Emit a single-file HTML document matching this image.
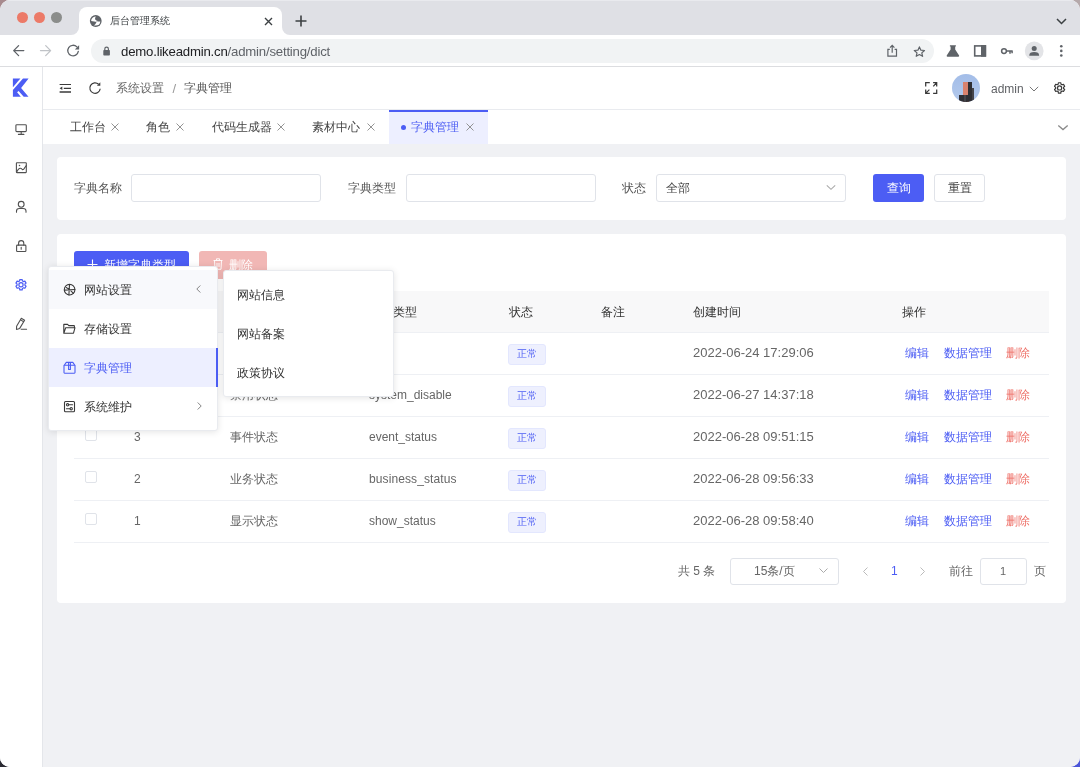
<!DOCTYPE html>
<html><head><meta charset="utf-8">
<style>
*{box-sizing:border-box;margin:0;padding:0}
html,body{width:1080px;height:767px;overflow:hidden}
body{position:relative;background:#fff;font-family:"Liberation Sans",sans-serif;color:#333}
.a{position:absolute}
.t{position:absolute;white-space:nowrap;line-height:1}
svg{position:absolute;overflow:visible}
.dot{position:absolute;width:11px;height:11px;border-radius:50%;top:12.4px}
.card{position:absolute;background:#fff;border-radius:4px}
.inp{position:absolute;border:1px solid #e0e3e9;border-radius:3px;background:#fff}
.lbl{position:absolute;font-size:12px;color:#606266;line-height:12px;white-space:nowrap}
.tabx{position:absolute;width:8px;height:8px}
.ic{fill:none;stroke:#4f4f4f;stroke-width:1.1;stroke-linecap:round;stroke-linejoin:round}
</style></head><body>
<!-- wallpaper corners -->
<div class="a" style="left:0;top:0;width:20px;height:20px;background:#a78a8e"></div>
<div class="a" style="right:0;top:0;width:20px;height:20px;background:#b5a9ab"></div>
<div class="a" style="left:0;bottom:0;width:20px;height:20px;background:#2b2b33"></div>
<div class="a" style="right:0;bottom:0;width:20px;height:20px;background:#4b55d8"></div>
<div class="a" style="left:0;top:0;width:1080px;height:767px;background:#fff;border-radius:10px;overflow:hidden;will-change:transform">
  <!-- tab strip -->
  <div class="a" style="left:0;top:0;width:1080px;height:35px;background:#dfe0e5;border-top:1px solid #e9eaee"></div>
  <div class="dot" style="left:17.4px;background:#ec7a68"></div>
  <div class="dot" style="left:34.3px;background:#ec7a68"></div>
  <div class="dot" style="left:51.3px;background:#8b8d8b"></div>
  <div class="a" style="left:71px;top:27px;width:219px;height:8px;background:#fff"></div>
  <div class="a" style="left:63px;top:19px;width:16px;height:16px;background:#dfe0e5;border-radius:0 0 8px 0"></div>
  <div class="a" style="left:282px;top:19px;width:16px;height:16px;background:#dfe0e5;border-radius:0 0 0 8px"></div>
  <div class="a" style="left:79px;top:7px;width:203px;height:28px;background:#fff;border-radius:8px 8px 0 0"></div>
  <!-- globe -->
  <svg style="left:0;top:0" width="1080" height="767"><circle cx="95.75" cy="21" r="5.9" fill="#5f6368"/><path d="M91.1 20.9Q91.2 18.9 92.9 17.5Q94.2 16.6 95.9 16.6Q94.6 18 95.2 19.4Q95.9 20.5 98.3 21.3Q96.8 22 94.2 21.5Q92.5 21.1 91.1 20.9Z" fill="#fff"/><path d="M100.3 21.6Q100.3 23.6 98.9 24.7Q97 25.8 94 25.4Q95.9 24.3 96.2 22.5Q96.7 21.6 98.3 21.5Z" fill="#fff"/></svg>
  <div class="t" style="left:109.5px;top:16px;font-size:10.3px;color:#3c4043">后台管理系统</div>
  <svg style="left:264px;top:17px" width="9" height="9" viewBox="0 0 9 9"><path d="M1 1L8 8M8 1L1 8" stroke="#3c4043" stroke-width="1.4"/></svg>
  <svg style="left:295px;top:15px" width="12" height="12" viewBox="0 0 12 12"><path d="M6 0.5V11.5M0.5 6H11.5" stroke="#3c4043" stroke-width="1.6"/></svg>
  <svg style="left:1056px;top:18px" width="11" height="7" viewBox="0 0 11 7"><path d="M1 1L5.5 5.5L10 1" fill="none" stroke="#3c4043" stroke-width="1.5"/></svg>
  <!-- toolbar -->
  <div class="a" style="left:0;top:35px;width:1080px;height:32px;background:#fff;border-bottom:1px solid #dcdde0"></div>
  <svg style="left:0;top:0" width="1080" height="767"><g fill="none" stroke-width="1.3" stroke-linecap="round" stroke-linejoin="round">
  <path d="M23.8 50.6H13.8M18.6 45.6L13.7 50.6L18.6 55.6" stroke="#5f6368"/>
  <path d="M40.5 50.6H50.5M45.7 45.6L50.6 50.6L45.7 55.6" stroke="#c0c3c7"/>
  <path d="M78.3 51.4A5.3 5.3 0 1 1 76.9 46.9" stroke="#5f6368"/></g>
  <path d="M79.1 45.3V49.6H74.8Z" fill="#5f6368"/>
  </svg>
  <div class="a" style="left:91px;top:39px;width:843px;height:23.6px;background:#f1f3f4;border-radius:12px"></div>
  <svg style="left:0;top:0" width="1080" height="767"><rect x="103.3" y="50" width="6.6" height="5.6" rx="0.8" fill="#5f6368"/><path d="M104.8 50.3V48.9A1.8 1.8 0 0 1 108.4 48.9V50.3" fill="none" stroke="#5f6368" stroke-width="1.2"/></svg>
  <div class="t" style="left:121px;top:44.5px;font-size:13.2px;letter-spacing:-0.2px;color:#202124">demo.likeadmin.cn<span style="color:#5f6368">/admin/setting/dict</span></div>
  <svg style="left:0;top:0" width="1080" height="767">
  <path d="M889.8 49.3H887.9V56.2H896.5V49.3H894.6M892.2 52.8V45.6M890 47.6L892.2 45.4L894.4 47.6" fill="none" stroke="#5f6368" stroke-width="1.2"/>
  <path d="M919.4 46.9L920.9 50.2L924.5 50.5L921.8 52.9L922.6 56.3L919.4 54.5L916.2 56.3L917 52.9L914.3 50.5L917.9 50.2Z" fill="none" stroke="#5f6368" stroke-width="1.2" stroke-linejoin="round"/>
  <path d="M949.9 45.2H955.9V46.5H955.2V49.4L959.1 55.6Q959.5 56.7 958.4 56.7H947.4Q946.3 56.7 946.7 55.6L950.6 49.4V46.5H949.9Z" fill="#5f6368"/>
  <rect x="974.7" y="45.9" width="10.7" height="10" fill="none" stroke="#5f6368" stroke-width="1.6"/><rect x="981" y="45.1" width="5.1" height="11.6" fill="#5f6368"/>
  <circle cx="1004" cy="51.1" r="2.4" fill="none" stroke="#5f6368" stroke-width="1.5"/><path d="M1006.3 51.1H1012.7M1010 51.1V53.8M1012.1 51.1V53.2" fill="none" stroke="#5f6368" stroke-width="1.5"/>
  <circle cx="1034.2" cy="50.9" r="9.4" fill="#e3e4e7"/>
  <circle cx="1034.2" cy="48.4" r="2.5" fill="#5f6368"/><path d="M1029.3 55.3Q1029.3 52.1 1034.2 52.1Q1039.1 52.1 1039.1 55.3V55.8H1029.3Z" fill="#5f6368"/>
  <circle cx="1061.3" cy="46.3" r="1.3" fill="#5f6368"/><circle cx="1061.3" cy="50.9" r="1.3" fill="#5f6368"/><circle cx="1061.3" cy="55.5" r="1.3" fill="#5f6368"/>
  </svg>
  <!-- ============ APP ============ -->
  <div class="a" style="left:0;top:67px;width:1080px;height:700px;background:#f0f1f4"></div>
  <!-- sidebar -->
  <div class="a" style="left:0;top:67px;width:43px;height:700px;background:#fff;border-right:1px solid #e4e6ea"></div>
  <svg style="left:0;top:0" width="1080" height="767"><path d="M12.9 78.6H20.4L12.9 87.3Z" fill="#4c5df4"/><path d="M23 78.6H28.6L21.1 88L28.5 96.8H23.7L18.6 91L17.1 92.3L20.8 96.8H12.9V90Z" fill="#4c5df4"/></svg>
  <svg style="left:0;top:0" width="1080" height="767"><g fill="none" stroke="#505050" stroke-width="1.1" stroke-linecap="round" stroke-linejoin="round">
  <rect x="15.9" y="124.7" width="10.4" height="6.9" rx="0.9"/><path d="M21.2 131.8V134.3M18.4 134.4H23.9"/>
  <rect x="16.4" y="162.7" width="9.9" height="9.9" rx="0.5"/><path d="M16.6 172.2Q18.6 168.3 20.2 168.3Q21.3 168.3 22.3 169.5Q23.5 170.3 24.8 167.6L26.3 165.5"/>
  <circle cx="21.2" cy="204.3" r="2.9"/><path d="M16.5 212.2V211Q16.5 208.5 19.3 208.5H23.2Q26 208.5 26 211V212.2"/>
  <rect x="16.6" y="245.1" width="9.3" height="6.4" rx="0.8"/><path d="M18.6 245.1V243.2A2.6 2.6 0 0 1 23.8 243.2V245.1M21.2 247.3V249.3"/>
  <path d="M21.3 318.3L24.6 320.2L19.7 328.4L16.5 329.4L16.6 326.3Z M20.5 319.9L23.7 321.8"/><path d="M21.2 329.3H26.6"/>
  </g><circle cx="19.5" cy="165.5" r="0.75" fill="#505050"/></svg>
  <!-- header -->
  <div class="a" style="left:43px;top:67px;width:1037px;height:43px;background:#fff;border-bottom:1px solid #e9ebef"></div>
  <svg style="left:0;top:0" width="1080" height="767"><path d="M59.6 84.5H71M63.8 88.3H71" stroke="#3a3a3a" stroke-width="1.2" fill="none"/><path d="M59.6 92H71" stroke="#3a3a3a" stroke-width="1.5" fill="none"/><path d="M59.6 88.3L62.3 86.5V90.1Z" fill="#3a3a3a"/><path d="M100.2 88.7A5.2 5.2 0 1 1 98.6 84.3" stroke="#3a3a3a" stroke-width="1.2" fill="none"/><path d="M100.3 82.3V85.7H96.9Z" fill="#3a3a3a"/>
  <path d="M1061.03 84.17 L1060.79 82.74 L1058.41 82.74 L1058.17 84.17 L1057.08 84.79 L1055.72 84.29 L1054.53 86.35 L1055.65 87.27 L1055.65 88.53 L1054.53 89.45 L1055.72 91.51 L1057.08 91.01 L1058.17 91.63 L1058.41 93.06 L1060.79 93.06 L1061.03 91.63 L1062.12 91.01 L1063.48 91.51 L1064.67 89.45 L1063.55 88.53 L1063.55 87.27 L1064.67 86.35 L1063.48 84.29 L1062.12 84.79Z" fill="none" stroke="#3a3a3a" stroke-width="1.2" stroke-linejoin="round"/><circle cx="1059.6" cy="87.9" r="2.1" fill="none" stroke="#3a3a3a" stroke-width="1.2"/>
  <path d="M22.43 280.97 L22.19 279.54 L19.81 279.54 L19.57 280.97 L18.48 281.59 L17.12 281.09 L15.93 283.15 L17.05 284.07 L17.05 285.33 L15.93 286.25 L17.12 288.31 L18.48 287.81 L19.57 288.43 L19.81 289.86 L22.19 289.86 L22.43 288.43 L23.52 287.81 L24.88 288.31 L26.07 286.25 L24.95 285.33 L24.95 284.07 L26.07 283.15 L24.88 281.09 L23.52 281.59Z" fill="none" stroke="#4c5df4" stroke-width="1.2" stroke-linejoin="round"/><circle cx="21" cy="284.7" r="2.1" fill="none" stroke="#4c5df4" stroke-width="1.2"/></svg>
  <div class="t" style="left:116px;top:82px;font-size:12px;color:#666">系统设置</div>
  <div class="t" style="left:172.5px;top:81.5px;font-size:13px;color:#999">/</div>
  <div class="t" style="left:184px;top:82px;font-size:12px;color:#555">字典管理</div>
  <!-- fullscreen -->
  <svg style="left:0;top:0" width="1080" height="767"><path d="M925.7 86.6V82.6H929.8M933.1 82.6H936.7V86.6M936.4 82.9L933.3 86.4M925.7 89.4V93.4H929.8M925.9 93.1L929.4 89.6M933.1 93.4H936.7V89.4" fill="none" stroke="#3a3a3a" stroke-width="1.25"/></svg>
  <!-- avatar -->
  <div class="a" style="left:952px;top:74px;width:28.4px;height:28.4px;border-radius:50%;background:linear-gradient(#a3bde8,#b3c9ec);overflow:hidden">
    <div class="a" style="left:11px;top:8px;width:5.5px;height:21px;background:#d9826e"></div>
    <div class="a" style="left:16.3px;top:8px;width:4px;height:21px;background:#2e2e33"></div>
    <div class="a" style="left:20.2px;top:14px;width:1.6px;height:13px;background:#44444a"></div>
    <div class="a" style="left:7px;top:21px;width:8.5px;height:8px;background:#2f2f35"></div>
    <div class="a" style="left:12px;top:21px;width:2px;height:8px;background:#44444a"></div>
  </div>
  <div class="t" style="left:991px;top:82.6px;font-size:12px;color:#606266">admin</div>
  <svg style="left:1029px;top:86px" width="10" height="6" viewBox="0 0 10 6"><path d="M0.8 0.8L5 5L9.2 0.8" fill="none" stroke="#777" stroke-width="1"/></svg>

  <!-- tabs -->
  <div class="a" style="left:43px;top:110px;width:1037px;height:34px;background:#fff"></div>
  <div class="t" style="left:70px;top:121px;font-size:12px;color:#444">工作台</div>
  <svg class="tabx" style="left:111px;top:123px" viewBox="0 0 8 8"><path d="M0.5 0.5L7.5 7.5M7.5 0.5L0.5 7.5" stroke="#888" stroke-width="0.9"/></svg>
  <div class="t" style="left:146px;top:121px;font-size:12px;color:#444">角色</div>
  <svg class="tabx" style="left:176px;top:123px" viewBox="0 0 8 8"><path d="M0.5 0.5L7.5 7.5M7.5 0.5L0.5 7.5" stroke="#888" stroke-width="0.9"/></svg>
  <div class="t" style="left:212px;top:121px;font-size:12px;color:#444">代码生成器</div>
  <svg class="tabx" style="left:277px;top:123px" viewBox="0 0 8 8"><path d="M0.5 0.5L7.5 7.5M7.5 0.5L0.5 7.5" stroke="#888" stroke-width="0.9"/></svg>
  <div class="t" style="left:312px;top:121px;font-size:12px;color:#444">素材中心</div>
  <svg class="tabx" style="left:367px;top:123px" viewBox="0 0 8 8"><path d="M0.5 0.5L7.5 7.5M7.5 0.5L0.5 7.5" stroke="#888" stroke-width="0.9"/></svg>
  <div class="a" style="left:389px;top:110px;width:99px;height:34px;background:#edefff;border-top:2px solid #4c5df4"></div>
  <div class="a" style="left:401px;top:125px;width:5px;height:5px;border-radius:50%;background:#4c5df4"></div>
  <div class="t" style="left:411px;top:121px;font-size:12px;color:#4c5df4">字典管理</div>
  <svg class="tabx" style="left:466px;top:123px" viewBox="0 0 8 8"><path d="M0.5 0.5L7.5 7.5M7.5 0.5L0.5 7.5" stroke="#888" stroke-width="0.9"/></svg>
  <svg style="left:0;top:0" width="1080" height="767"><path d="M1058.3 125.4L1063 129.6L1067.7 125.4" fill="none" stroke="#8a8a8a" stroke-width="1.3"/></svg>
  <!-- search card -->
  <div class="card" style="left:57px;top:157px;width:1009px;height:63px"></div>
  <div class="t" style="left:74px;top:182px;font-size:12px;color:#555">字典名称</div>
  <div class="inp" style="left:131px;top:174px;width:190px;height:28px"></div>
  <div class="t" style="left:348px;top:182px;font-size:12px;color:#555">字典类型</div>
  <div class="inp" style="left:406px;top:174px;width:190px;height:28px"></div>
  <div class="t" style="left:622px;top:182px;font-size:12px;color:#555">状态</div>
  <div class="inp" style="left:656px;top:174px;width:190px;height:28px"></div>
  <div class="t" style="left:666px;top:182px;font-size:12px;color:#444">全部</div>
  <svg style="left:0;top:0" width="1080" height="767"><path d="M826.8 185.3L831 189.3L835.2 185.3" fill="none" stroke="#ababab" stroke-width="1.15"/></svg>
  <div class="a" style="left:873px;top:174px;width:51px;height:28px;background:#4c5df4;border-radius:3px"></div>
  <div class="t" style="left:887px;top:182px;font-size:12px;color:#fff">查询</div>
  <div class="inp" style="left:934px;top:174px;width:51px;height:28px"></div>
  <div class="t" style="left:948px;top:182px;font-size:12px;color:#444">重置</div>

  <!-- table card -->
  <div class="card" style="left:57px;top:234px;width:1009px;height:369px"></div>
  <div class="a" style="left:74px;top:251px;width:115px;height:28px;background:#4c5df4;border-radius:3px"></div>
  <svg style="left:87px;top:259px" width="11" height="11" viewBox="0 0 11 11"><path d="M5.5 0.5V10.5M0.5 5.5H10.5" stroke="#fff" stroke-width="1.1"/></svg>
  <div class="t" style="left:104px;top:259px;font-size:12px;color:#fff">新增字典类型</div>
  <div class="a" style="left:199px;top:251px;width:68px;height:28px;background:#f1b7b5;border-radius:3px"></div>
  <svg style="left:213px;top:258px" width="10" height="12" viewBox="0 0 10 12"><path d="M0.5 2.5H9.5M3.5 2.5V0.8H6.5V2.5M1.5 2.5L2 11.3H8L8.5 2.5M4 5V9M6 5V9" fill="none" stroke="#fff" stroke-width="0.9"/></svg>
  <div class="t" style="left:229px;top:259px;font-size:12px;color:#fff">删除</div>

  <!-- table -->
  <div class="a" style="left:74px;top:291px;width:975px;height:42px;background:#f8f8f9;border-bottom:1px solid #eef0f4"></div>
  <div class="inp" style="left:85px;top:304px;width:12px;height:12px;border-radius:2px"></div>
  <div class="t" style="left:134px;top:306px;font-size:12px;color:#333">ID</div>
  <div class="t" style="left:230px;top:306px;font-size:12px;color:#333">字典名称</div>
  <div class="t" style="left:369px;top:306px;font-size:12px;color:#333">字典类型</div>
  <div class="t" style="left:509px;top:306px;font-size:12px;color:#333">状态</div>
  <div class="t" style="left:601px;top:306px;font-size:12px;color:#333">备注</div>
  <div class="t" style="left:693px;top:306px;font-size:12px;color:#333">创建时间</div>
  <div class="t" style="left:902px;top:306px;font-size:12px;color:#333">操作</div>
  <div class="a" style="left:74px;top:333px;width:975px;height:42px;border-bottom:1px solid #eef0f4"></div>
  <div class="inp" style="left:85px;top:345px;width:12px;height:12px;border-radius:2px"></div>
  <div class="t" style="left:134px;top:347px;font-size:12px;color:#666">5</div>
  <div class="t" style="left:230px;top:347px;font-size:12px;color:#666">字典状态</div>
  <div class="t" style="left:369px;top:347px;font-size:12px;color:#666">sex</div>
  <div class="a" style="left:508px;top:344px;width:38px;height:21px;background:#eef0fe;border:1px solid #e3e7fe;border-radius:3px"></div>
  <div class="t" style="left:517px;top:349px;font-size:10px;color:#4c5df4">正常</div>
  <div class="t" style="left:693px;top:346px;font-size:13px;color:#666">2022-06-24 17:29:06</div>
  <div class="t" style="left:905px;top:347px;font-size:12px;color:#4c5df4">编辑</div>
  <div class="t" style="left:944px;top:347px;font-size:12px;color:#4c5df4">数据管理</div>
  <div class="t" style="left:1006px;top:347px;font-size:12px;color:#ee6e66">删除</div>
  <div class="a" style="left:74px;top:375px;width:975px;height:42px;border-bottom:1px solid #eef0f4"></div>
  <div class="inp" style="left:85px;top:387px;width:12px;height:12px;border-radius:2px"></div>
  <div class="t" style="left:134px;top:389px;font-size:12px;color:#666">4</div>
  <div class="t" style="left:230px;top:389px;font-size:12px;color:#666">禁用状态</div>
  <div class="t" style="left:369px;top:389px;font-size:12px;color:#666">system_disable</div>
  <div class="a" style="left:508px;top:386px;width:38px;height:21px;background:#eef0fe;border:1px solid #e3e7fe;border-radius:3px"></div>
  <div class="t" style="left:517px;top:391px;font-size:10px;color:#4c5df4">正常</div>
  <div class="t" style="left:693px;top:388px;font-size:13px;color:#666">2022-06-27 14:37:18</div>
  <div class="t" style="left:905px;top:389px;font-size:12px;color:#4c5df4">编辑</div>
  <div class="t" style="left:944px;top:389px;font-size:12px;color:#4c5df4">数据管理</div>
  <div class="t" style="left:1006px;top:389px;font-size:12px;color:#ee6e66">删除</div>
  <div class="a" style="left:74px;top:417px;width:975px;height:42px;border-bottom:1px solid #eef0f4"></div>
  <div class="inp" style="left:85px;top:429px;width:12px;height:12px;border-radius:2px"></div>
  <div class="t" style="left:134px;top:431px;font-size:12px;color:#666">3</div>
  <div class="t" style="left:230px;top:431px;font-size:12px;color:#666">事件状态</div>
  <div class="t" style="left:369px;top:431px;font-size:12px;color:#666">event_status</div>
  <div class="a" style="left:508px;top:428px;width:38px;height:21px;background:#eef0fe;border:1px solid #e3e7fe;border-radius:3px"></div>
  <div class="t" style="left:517px;top:433px;font-size:10px;color:#4c5df4">正常</div>
  <div class="t" style="left:693px;top:430px;font-size:13px;color:#666">2022-06-28 09:51:15</div>
  <div class="t" style="left:905px;top:431px;font-size:12px;color:#4c5df4">编辑</div>
  <div class="t" style="left:944px;top:431px;font-size:12px;color:#4c5df4">数据管理</div>
  <div class="t" style="left:1006px;top:431px;font-size:12px;color:#ee6e66">删除</div>
  <div class="a" style="left:74px;top:459px;width:975px;height:42px;border-bottom:1px solid #eef0f4"></div>
  <div class="inp" style="left:85px;top:471px;width:12px;height:12px;border-radius:2px"></div>
  <div class="t" style="left:134px;top:473px;font-size:12px;color:#666">2</div>
  <div class="t" style="left:230px;top:473px;font-size:12px;color:#666">业务状态</div>
  <div class="t" style="left:369px;top:473px;font-size:12px;letter-spacing:0.1px;color:#666">business_status</div>
  <div class="a" style="left:508px;top:470px;width:38px;height:21px;background:#eef0fe;border:1px solid #e3e7fe;border-radius:3px"></div>
  <div class="t" style="left:517px;top:475px;font-size:10px;color:#4c5df4">正常</div>
  <div class="t" style="left:693px;top:472px;font-size:13px;color:#666">2022-06-28 09:56:33</div>
  <div class="t" style="left:905px;top:473px;font-size:12px;color:#4c5df4">编辑</div>
  <div class="t" style="left:944px;top:473px;font-size:12px;color:#4c5df4">数据管理</div>
  <div class="t" style="left:1006px;top:473px;font-size:12px;color:#ee6e66">删除</div>
  <div class="a" style="left:74px;top:501px;width:975px;height:42px;border-bottom:1px solid #eef0f4"></div>
  <div class="inp" style="left:85px;top:513px;width:12px;height:12px;border-radius:2px"></div>
  <div class="t" style="left:134px;top:515px;font-size:12px;color:#666">1</div>
  <div class="t" style="left:230px;top:515px;font-size:12px;color:#666">显示状态</div>
  <div class="t" style="left:369px;top:515px;font-size:12px;color:#666">show_status</div>
  <div class="a" style="left:508px;top:512px;width:38px;height:21px;background:#eef0fe;border:1px solid #e3e7fe;border-radius:3px"></div>
  <div class="t" style="left:517px;top:517px;font-size:10px;color:#4c5df4">正常</div>
  <div class="t" style="left:693px;top:514px;font-size:13px;color:#666">2022-06-28 09:58:40</div>
  <div class="t" style="left:905px;top:515px;font-size:12px;color:#4c5df4">编辑</div>
  <div class="t" style="left:944px;top:515px;font-size:12px;color:#4c5df4">数据管理</div>
  <div class="t" style="left:1006px;top:515px;font-size:12px;color:#ee6e66">删除</div>
  <!-- pagination -->
  <div class="t" style="left:678px;top:565px;font-size:12px;color:#666">共 5 条</div>
  <div class="inp" style="left:730px;top:558px;width:109px;height:27px"></div>
  <div class="t" style="left:754px;top:565px;font-size:12px;color:#666">15条/页</div>
  <svg style="left:819px;top:568px" width="9" height="5" viewBox="0 0 9 5"><path d="M0.5 0.5L4.5 4.5L8.5 0.5" fill="none" stroke="#aaa" stroke-width="1"/></svg>
  <svg style="left:863px;top:567px" width="5" height="9" viewBox="0 0 5 9"><path d="M4.5 0.5L0.5 4.5L4.5 8.5" fill="none" stroke="#bbb" stroke-width="1"/></svg>
  <div class="t" style="left:891px;top:565px;font-size:12px;color:#4c5df4">1</div>
  <svg style="left:920px;top:567px" width="5" height="9" viewBox="0 0 5 9"><path d="M0.5 0.5L4.5 4.5L0.5 8.5" fill="none" stroke="#bbb" stroke-width="1"/></svg>
  <div class="t" style="left:949px;top:565px;font-size:12px;color:#666">前往</div>
  <div class="inp" style="left:980px;top:558px;width:47px;height:27px"></div>
  <div class="t" style="left:1000px;top:566px;font-size:11px;color:#666">1</div>
  <div class="t" style="left:1034px;top:565px;font-size:12px;color:#666">页</div>

  <!-- popup menu 1 -->
  <div class="a" style="left:48px;top:266px;width:170px;height:165px;background:#fff;border-radius:3px;box-shadow:0 1px 7px rgba(0,0,0,0.11);border:1px solid #e9ebef"></div>
  <div class="a" style="left:49px;top:270px;width:168px;height:39px;background:#f8f9fc"></div>
  <div class="a" style="left:49px;top:348px;width:169px;height:39px;background:#edefff;border-right:2px solid #4c5df4"></div>
  <svg style="left:0;top:0" width="1080" height="767"><g fill="none" stroke="#3a3a3a" stroke-width="1.1" stroke-linecap="round" stroke-linejoin="round"><circle cx="69.6" cy="289.7" r="5.3"/><path d="M69.5 284.5L68.9 295M64.4 290.1L74.9 289.5M66.2 287.5L69.7 289.6L73.4 293.4"/>
  <path d="M63.8 333.2V324.4H67.6L68.8 325.6H74Q74.4 325.6 74.4 326.2V327.5M63.9 333.2L65.7 327.7H75L73.5 333.2Z"/>
  <path d="M64.4 374.6" /></g>
  <g fill="none" stroke="#4c5df4" stroke-width="1.1" stroke-linecap="round" stroke-linejoin="round"><path d="M64.2 365.3L66.3 362.4H72.8L74.9 365.3M64 365.3V372.6Q64 373.2 64.6 373.2H74.4Q75 373.2 75 372.6V365.3H64M68.6 362.5V369.5H70.4V362.5"/></g>
  <g fill="none" stroke="#3a3a3a" stroke-width="1.1" stroke-linecap="round" stroke-linejoin="round"><rect x="64.5" y="401.5" width="10" height="10.3" rx="1"/><circle cx="67.6" cy="404.8" r="1.15"/><path d="M68.8 404.7H72.6M66.4 408.7H70"/><circle cx="71.2" cy="408.7" r="1.15"/></g></svg>
  <div class="t" style="left:84px;top:284px;font-size:12px;color:#333">网站设置</div>
  <svg style="left:196px;top:285px" width="5" height="8" viewBox="0 0 5 8"><path d="M4.3 0.5L0.8 4L4.3 7.5" fill="none" stroke="#777" stroke-width="0.9"/></svg>
  <div class="t" style="left:84px;top:323px;font-size:12px;color:#333">存储设置</div>
  <div class="t" style="left:84px;top:362px;font-size:12px;color:#4c5df4">字典管理</div>
  <div class="t" style="left:84px;top:401px;font-size:12px;color:#333">系统维护</div>
  <svg style="left:197px;top:402px" width="5" height="8" viewBox="0 0 5 8"><path d="M0.7 0.5L4.2 4L0.7 7.5" fill="none" stroke="#777" stroke-width="0.9"/></svg>
  <!-- popup menu 2 -->
  <div class="a" style="left:223px;top:270px;width:171px;height:127px;background:#fff;border-radius:3px;box-shadow:0 1px 7px rgba(0,0,0,0.11);border:1px solid #e9ebef"></div>
  <div class="t" style="left:237px;top:289px;font-size:12px;color:#333">网站信息</div>
  <div class="t" style="left:237px;top:328px;font-size:12px;color:#333">网站备案</div>
  <div class="t" style="left:237px;top:367px;font-size:12px;color:#333">政策协议</div>
</div>
</body></html>
